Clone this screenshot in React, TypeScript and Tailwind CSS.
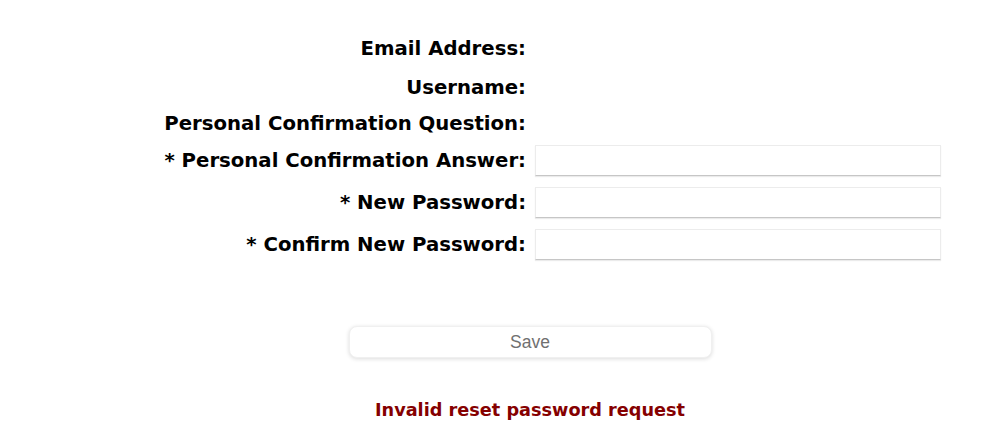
export default function App() {
  const labelCls =
    "w-[526px] shrink-0 text-right text-[19.7px] font-bold text-black whitespace-nowrap";
  const inputCls =
    "ml-[9px] w-[406px] h-[31px] bg-white border border-[#ececec] border-b-[#c6c6c6] shadow-[0_1px_1px_rgba(0,0,0,0.08)] outline-none";

  return (
    <div
      className="w-[1000px] h-[436px] bg-white overflow-hidden pt-[31px]"
      style={{ fontFamily: '"DejaVu Sans", Verdana, sans-serif' }}
    >
      <div className="flex items-center h-9">
        <div className={labelCls}>Email Address:</div>
      </div>
      <div className="flex items-center h-9 mt-[3px]">
        <div className={labelCls}>Username:</div>
      </div>
      <div className="flex items-center h-9">
        <div className={labelCls}>Personal Confirmation Question:</div>
      </div>
      <div className="flex items-center h-[31px] mt-[3px]">
        <div className={labelCls}>* Personal Confirmation Answer:</div>
        <input type="text" className={inputCls} />
      </div>
      <div className="flex items-center h-[31px] mt-[11px]">
        <div className={labelCls}>* New Password:</div>
        <input type="password" className={inputCls} />
      </div>
      <div className="flex items-center h-[31px] mt-[11px]">
        <div className={labelCls}>* Confirm New Password:</div>
        <input type="password" className={inputCls} />
      </div>

      <div className="flex justify-center mt-[66px] pl-[60px]">
        <button
          className="w-[363px] h-[32px] rounded-lg bg-white border border-[#f0f0f0] shadow-[0_1px_4px_rgba(0,0,0,0.14)] text-[17.5px] text-[#707070]"
          style={{ fontFamily: '"Liberation Sans", Arial, sans-serif' }}
        >
          Save
        </button>
      </div>

      <div className="flex justify-center mt-[40px] pl-[60px]">
        <p className="text-[17.7px] font-bold text-[#850000] leading-6">
          Invalid reset password request
        </p>
      </div>
    </div>
  );
}
